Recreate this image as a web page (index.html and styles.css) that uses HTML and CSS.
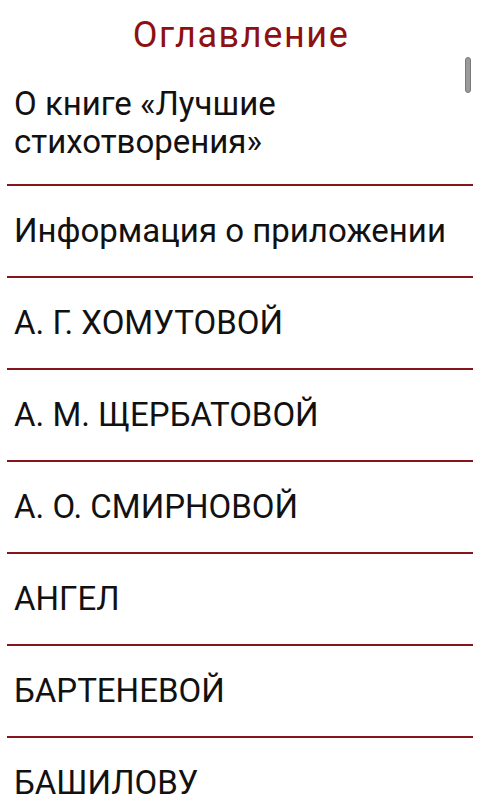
FILE: index.html
```html
<!DOCTYPE html>
<html lang="ru">
<head>
<meta charset="utf-8">
<link rel="stylesheet" href="styles.css">
</head>
<body>
<div class="screen">
  <h1 class="title">Оглавление</h1>
  <ul class="toc">
    <li class="item">О книге «Лучшие стихотворения»</li>
    <li class="item">Информация о приложении</li>
    <li class="item">А. Г. ХОМУТОВОЙ</li>
    <li class="item">А. М. ЩЕРБАТОВОЙ</li>
    <li class="item">А. О. СМИРНОВОЙ</li>
    <li class="item">АНГЕЛ</li>
    <li class="item">БАРТЕНЕВОЙ</li>
    <li class="item">БАШИЛОВУ</li>
    <li class="item">БЕГЛЕЦ</li>
  </ul>
  <div class="scrollbar"></div>
</div>
</body>
</html>
```
FILE: styles.css
```css
html, body {
  margin: 0;
  padding: 0;
  background: #ffffff;
}
.screen {
  position: relative;
  width: 480px;
  height: 800px;
  overflow: hidden;
  font-family: Roboto, "Noto Sans", sans-serif;
}
.title {
  margin: 0;
  height: 56px;
  box-sizing: border-box;
  padding-top: 14px;
  padding-left: 2px;
  font-size: 36px;
  line-height: 42px;
  letter-spacing: 1.6px;
  font-weight: 400;
  color: #8e1010;
  text-align: center;
}
.toc {
  list-style: none;
  margin: 0;
  padding: 0 7px;
}
.item {
  padding: 26px 0 26px 7px;
  font-size: 33px;
  line-height: 38px;
  color: #111111;
  white-space: nowrap;
  border-bottom: 2px solid #841518;
}
.item:first-child {
  padding-top: 29px;
  padding-bottom: 23px;
  padding-right: 40px;
  white-space: normal;
}
.scrollbar {
  position: absolute;
  top: 57px;
  left: 465px;
  width: 6px;
  height: 36px;
  border-radius: 3px;
  background: #9a9a9a;
  border: 1px solid #7a7a7a;
  box-sizing: border-box;
}
```
